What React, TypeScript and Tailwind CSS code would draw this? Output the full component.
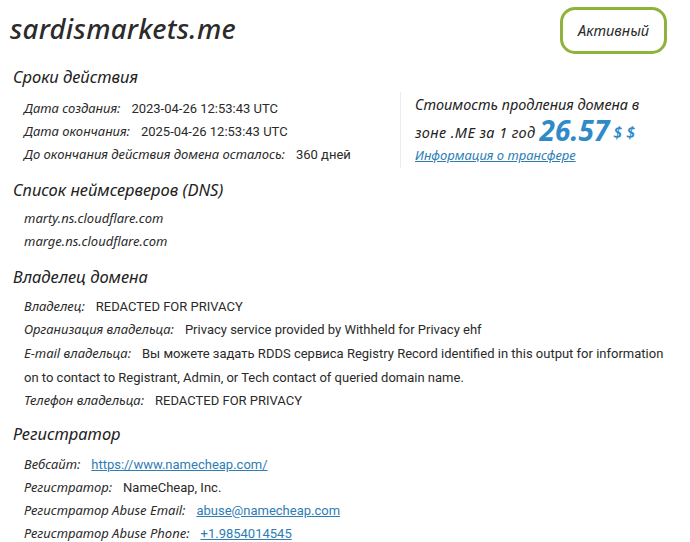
import React from "react";

const italic = { fontFamily: '"Noto Sans", "Open Sans", sans-serif' };

function Row({ label, children }: { label: string; children: React.ReactNode }) {
  return (
    <div className="flex items-baseline h-[23px] leading-[23px]">
      <span className="italic text-[13px] text-[#2a2a2a] mr-[11px]" style={italic}>{label}</span>
      <span className="text-[13px] text-[#2a2a2a]">{children}</span>
    </div>
  );
}

function Heading({ children }: { children: React.ReactNode }) {
  return (
    <h2 className="italic text-[16.5px] text-[#222] leading-[24px]" style={italic}>
      {children}
    </h2>
  );
}

export default function App() {
  return (
    <div
      className="w-[690px] h-[542px] bg-white overflow-hidden text-[#2a2a2a]"
      style={{ fontFamily: 'Roboto, "Liberation Sans", sans-serif' }}
    >
      <div className="flex justify-between items-start pl-[10px] pr-[23px] pt-[7px]">
        <h1 className="italic font-medium text-[27.5px] leading-[44px] text-[#2b2b2b] tracking-[0.3px]" style={italic}>
          sardismarkets.me
        </h1>
        <div className="w-[107px] h-[47px] border-[3px] border-[#8db33a] rounded-[15px] flex items-center justify-center">
          <span className="italic text-[14.5px] text-[#2a2a2a]" style={italic}>Активный</span>
        </div>
      </div>

      <div className="pl-[13px] mt-[11px]">
        <Heading>Сроки действия</Heading>
        <div className="flex mt-[8px]">
          <div className="pl-[11px] w-[387px]">
            <Row label="Дата создания:">2023-04-26 12:53:43 UTC</Row>
            <Row label="Дата окончания:">2025-04-26 12:53:43 UTC</Row>
            <Row label="До окончания действия домена осталось:">360 дней</Row>
          </div>
          <div className="border-l border-[#ececec] pl-[14px] mt-[-5px] h-[76px]">
            <div className="italic text-[14.5px] leading-[24px] text-[#222]" style={italic}>
              Стоимость продления домена в
            </div>
            <div className="flex items-end italic text-[14.5px] h-[28px] text-[#222]" style={italic}>
              <span className="tracking-[0.4px] leading-[24px]">зоне .ME за 1 год</span>
              <span className="ml-[4px] font-bold text-[28px] text-[#2f8bc8] leading-[28px]">26.57</span>
              <span className="ml-[4px] font-semibold text-[16px] text-[#2f8bc8] leading-[24px]">$ $</span>
            </div>
            <div className="italic text-[13px] leading-[22px] text-[#2e7db5] underline" style={italic}>
              Информация о трансфере
            </div>
          </div>
        </div>

        <div className="mt-[10px]">
          <Heading>Список неймсерверов (DNS)</Heading>
          <div className="pl-[11px] mt-[5px]">
            <div className="italic text-[13px] h-[23px] leading-[23px]" style={italic}>marty.ns.cloudflare.com</div>
            <div className="italic text-[13px] h-[23px] leading-[23px]" style={italic}>marge.ns.cloudflare.com</div>
          </div>
        </div>

        <div className="mt-[12px]">
          <Heading>Владелец домена</Heading>
          <div className="pl-[11px] mt-[6px]">
            <Row label="Владелец:">REDACTED FOR PRIVACY</Row>
            <Row label="Организация владельца:">Privacy service provided by Withheld for Privacy ehf</Row>
            <p className="leading-[23px] w-[650px]">
              <span className="italic text-[13px] pr-[11px]" style={italic}>E-mail владельца:</span>
              <span className="text-[13px]">
                Вы можете задать RDDS сервиса Registry Record identified in this output for information on to contact to Registrant, Admin, or Tech contact of queried domain name.
              </span>
            </p>
            <Row label="Телефон владельца:">REDACTED FOR PRIVACY</Row>
          </div>
        </div>

        <div className="mt-[10px]">
          <Heading>Регистратор</Heading>
          <div className="pl-[11px] mt-[7px]">
            <Row label="Вебсайт:">
              <span className="text-[#2e7db5] underline">https://www.namecheap.com/</span>
            </Row>
            <Row label="Регистратор:">NameCheap, Inc.</Row>
            <Row label="Регистратор Abuse Email:">
              <span className="text-[#2e7db5] underline">abuse@namecheap.com</span>
            </Row>
            <Row label="Регистратор Abuse Phone:">
              <span className="text-[#2e7db5] underline">+1.9854014545</span>
            </Row>
          </div>
        </div>
      </div>
    </div>
  );
}
